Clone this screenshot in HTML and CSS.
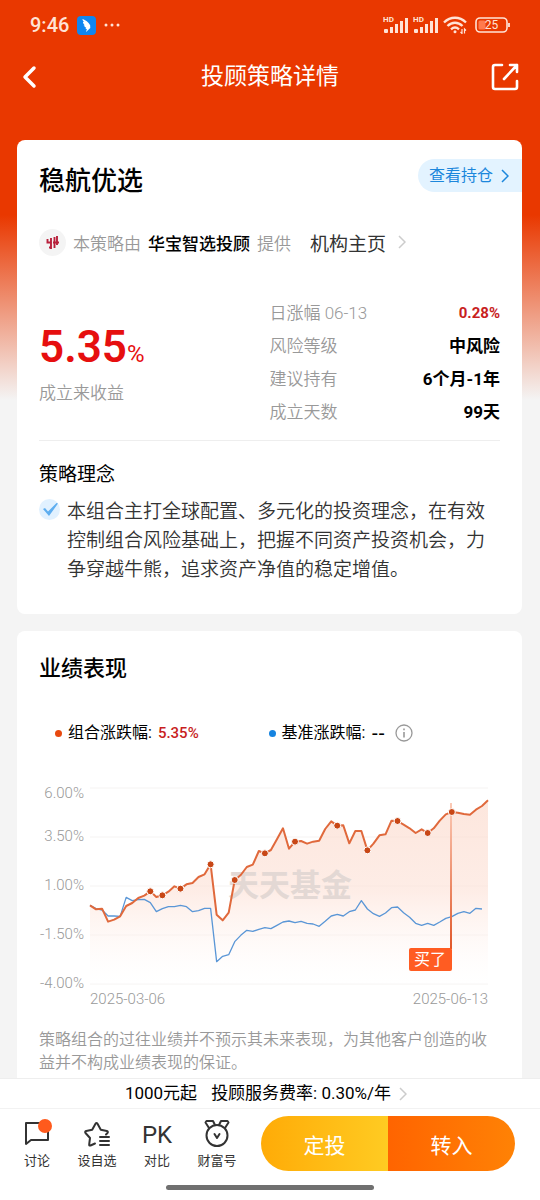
FILE: index.html
```html
<!DOCTYPE html>
<html lang="zh-CN">
<head>
    <meta charset="UTF-8">
    <meta name="viewport" content="width=device-width, initial-scale=1.0">
    <title>投顾策略详情</title>
    <link rel="stylesheet" href="styles.css">
</head>
<body>
    <!-- Status bar -->
    <div class="status">
        <span class="time">9:46</span>
        <svg class="app-icon" width="19" height="19" viewBox="0 0 19 19">
            <rect width="19" height="19" rx="4" fill="#0f86f0"/>
            <path d="M5.500 3c3 1 6 3 7.500 6 .5 1.200.2 1.900-.2 2.500h1L9 16l.9-2.900H8.300l1-1.200C7.500 11 6.700 9.600 6.800 9.300L8 9.400C6.500 8 5.900 6.600 6 5.900l1 .2C5.900 5 5.500 4 5.500 3z" fill="#fff"/>
        </svg>
        <svg width="17" height="4" viewBox="0 0 17 4" fill="#ffe3d6">
            <circle cx="2" cy="2" r="1.500"/><circle cx="8" cy="2" r="1.500"/><circle cx="14" cy="2" r="1.500"/>
        </svg>
        <div class="status-right">
            <svg width="26" height="18" viewBox="0 0 26 18">
                <use href="#signal"/>
            </svg>
            <svg width="26" height="18" viewBox="0 0 26 18">
                <g id="signal" fill="#ffe3d6">
                    <text x="0" y="6" class="hd">HD</text>
                    <rect x="1" y="13" width="4" height="4" rx="1"/>
                    <rect x="7" y="11" width="3" height="6"/>
                    <rect x="12" y="8" width="3" height="9"/>
                    <rect x="17" y="5" width="3" height="12"/>
                    <rect x="22" y="2" width="3" height="15"/>
                </g>
            </svg>
            <svg class="wifi" width="25" height="18" viewBox="0 0 25 18" fill="none" stroke="#ffe3d6" stroke-width="2.400">
                <path d="M1 6.500C7.500.2 16.500.2 23 6.500M4.500 10c4.500-4.300 10.500-4.300 15 0M8 13.300c2.500-2.200 5.500-2.200 8 0"/>
                <circle cx="12" cy="15.800" r="1.500" fill="#ffe3d6" stroke="none"/>
                <path d="M19 13v4.500l-1.500-1.500M21.500 17.500V13l1.500 1.500" stroke-width="1.200"/>
            </svg>
            <svg class="battery" width="35" height="17" viewBox="0 0 35 17">
                <rect x="1" y="1" width="31" height="14" rx="4" fill="none" stroke="#ffe3d6" stroke-width="1.600"/>
                <rect x="3.500" y="3.500" width="7" height="9" rx="1.500" fill="#ff7a4e"/>
                <path d="M34 6v4" stroke="#ffe3d6" stroke-width="1.800"/>
                <text x="16.500" y="12" text-anchor="middle" class="battery-text">25</text>
            </svg>
        </div>
    </div>

    <!-- Title bar -->
    <header class="topbar">
        <button class="icon-btn" aria-label="返回">
            <svg width="16" height="26" viewBox="0 0 16 26" fill="none" stroke="#fff" stroke-width="3.500" stroke-linecap="round" stroke-linejoin="round"><path d="M13 4L4 13l9 9"/></svg>
        </button>
        <h1>投顾策略详情</h1>
        <button class="icon-btn" aria-label="分享">
            <svg width="28" height="28" viewBox="0 0 28 28" fill="none" stroke="#fff" stroke-width="2.600" stroke-linecap="round" stroke-linejoin="round"><path d="M11 2H4a2 2 0 0 0-2 2v20a2 2 0 0 0 2 2h20a2 2 0 0 0 2-2v-6M13 16L26 2M19 2h7v7"/></svg>
        </button>
    </header>

    <main>
        <!-- Strategy summary -->
        <section class="card">
            <div class="card-head">
                <h2 class="name">稳航优选</h2>
                <a href="#" class="pill">查看持仓
                    <svg width="8" height="14" viewBox="0 0 8 14" fill="none" stroke="#1c87dc" stroke-width="1.500"><path d="M1 1l6 6-6 6"/></svg>
                </a>
            </div>
            <div class="provider">
                <svg class="logo" width="27" height="27" viewBox="0 0 27 27">
                    <circle cx="13.500" cy="13.500" r="13.500" fill="#f4f4f4"/>
                    <path d="M8.500 10v4M7.500 13.500H12M12 9v11M15.500 8v11M10 18.500h2M14 13.500h6M18 7v9" fill="none" stroke="#b8213c" stroke-width="1.900"/>
                </svg>
                <span>本策略由</span>
                <strong>华宝智选投顾</strong>
                <span>提供</span>
                <a href="#">机构主页
                    <svg width="8" height="14" viewBox="0 0 8 14" fill="none" stroke="#ccc" stroke-width="1.500"><path d="M1 1l6 6-6 6"/></svg>
                </a>
            </div>
            <div class="stats">
                <div class="total">
                    <p class="total-num">5.35<small>%</small></p>
                    <p class="total-label">成立来收益</p>
                </div>
                <dl>
                    <div><dt>日涨幅 06-13</dt><dd class="red">0.28%</dd></div>
                    <div><dt>风险等级</dt><dd>中风险</dd></div>
                    <div><dt>建议持有</dt><dd>6个月-1年</dd></div>
                    <div><dt>成立天数</dt><dd>99天</dd></div>
                </dl>
            </div>
            <h3>策略理念</h3>
            <div class="idea">
                <svg width="21" height="21" viewBox="0 0 21 21">
                    <circle cx="10.500" cy="10.500" r="10.500" fill="#e1f1ff"/>
                    <path d="M4 10l2-1 3 3.500L17.500 4l1.500.5L10 17z" fill="#5eaef0"/>
                </svg>
                <p>本组合主打全球配置、多元化的投资理念，在有效控制组合风险基础上，把握不同资产投资机会，力争穿越牛熊，追求资产净值的稳定增值。</p>
            </div>
        </section>

        <!-- Performance -->
        <section class="card card-last">
            <h2>业绩表现</h2>
            <div class="legend">
                <div class="legend-item"><i class="dot"></i>组合涨跌幅: <b>5.35%</b></div>
                <div class="legend-item"><i class="dot dot-blue"></i>基准涨跌幅: <span class="none">--</span>
                    <svg width="18" height="18" viewBox="0 0 18 18" fill="none" stroke="#999" stroke-width="1.300"><circle cx="9" cy="9" r="8"/><path d="M9 8v5.500M9 4.500v1.800" stroke-width="1.600"/></svg>
                </div>
            </div>
            <svg class="chart" viewBox="0 0 461 232">
                <defs>
                    <linearGradient id="fill" x1="0" y1="0" x2="0" y2="1">
                        <stop offset="0" stop-color="#fbd9cb" stop-opacity=".65"/>
                        <stop offset=".5" stop-color="#fde3d9" stop-opacity=".65"/>
                        <stop offset="1" stop-color="#fff" stop-opacity=".2"/>
                    </linearGradient>
                    <linearGradient id="stem" x1="0" y1="0" x2="0" y2="1">
                        <stop offset="0" stop-color="#fbcab6"/>
                        <stop offset="1" stop-color="#e0582a"/>
                    </linearGradient>
                </defs>
                <g class="axis" text-anchor="end">
                    <text x="45" y="20">6.00%</text>
                    <text x="45" y="63">3.50%</text>
                    <text x="45" y="112">1.00%</text>
                    <text x="45" y="161">-1.50%</text>
                    <text x="45" y="210">-4.00%</text>
                </g>
                <g class="axis">
                    <text x="51" y="226">2025-03-06</text>
                    <text x="449" y="226" text-anchor="end">2025-06-13</text>
                </g>
                <g transform="translate(51 10)">
                    <path class="grid" d="M0 0h398M0 49h398M0 98h398M0 147h398M0 196h398"/>
                    <polygon id="area" fill="url(#fill)"/>
                    <text class="watermark" x="138" y="108">天天基金</text>
                    <polyline id="base" class="line-base"/>
                    <polyline id="fund" class="line-fund"/>
                    <rect x="360" y="15" width="2" height="146" fill="url(#stem)"/>
                    <g id="marks" class="marks"></g>
                    <rect x="319" y="160" width="43" height="23" rx="2" fill="#ff5c22"/>
                    <text class="flag" x="340" y="177" text-anchor="middle">买了</text>
                </g>
            </svg>
            <p class="note">策略组合的过往业绩并不预示其未来表现，为其他客户创造的收益并不构成业绩表现的保证。</p>
        </section>
    </main>

    <!-- Bottom bar -->
    <footer>
        <a href="#" class="fee"><span>1000元起</span><span>投顾服务费率: 0.30%/年</span>
            <svg width="8" height="14" viewBox="0 0 8 14" fill="none" stroke="#ccc" stroke-width="1.500"><path d="M1 1l6 6-6 6"/></svg>
        </a>
        <div class="actions">
            <nav>
                <a href="#">
                    <svg width="30" height="28" viewBox="0 0 30 28" fill="none" stroke="#333" stroke-width="2" stroke-linejoin="round">
                        <path d="M4 4h22v17H9l-5 4z"/>
                        <circle cx="23" cy="7" r="7" fill="#ff5a1c" stroke="none"/>
                    </svg>
                    讨论
                </a>
                <a href="#">
                    <svg width="30" height="28" viewBox="0 0 30 28" fill="none" stroke="#333" stroke-width="2" stroke-linejoin="round" stroke-linecap="round">
                        <path d="M13 24.500l-4.500 2q-1.500.5-1.300-1.200l.8-6.300-4.500-5q-1-1.500.7-2l6-1.200 3.300-6q1-1.500 2 0l3.300 6 6 1.200q1.700.5.700 2l-1.500 1.500"/>
                        <path d="M18 18h9M18 22h9M18 26h9"/>
                    </svg>
                    设自选
                </a>
                <a href="#"><span class="pk">PK</span>对比</a>
                <a href="#">
                    <svg width="30" height="28" viewBox="0 0 30 28" fill="none" stroke="#333" stroke-width="2" stroke-linejoin="round" stroke-linecap="round">
                        <circle cx="15" cy="16.500" r="10.500"/>
                        <path d="M7 9L3.500 3.500 4.500 2H11l2 4M23 9l3.500-5.500-1-1.500H19l-2 4M12.500 15l2.500 4 2.500-4"/>
                    </svg>
                    财富号
                </a>
            </nav>
            <div class="btn-group">
                <button class="btn-plan">定投</button>
                <button class="btn-buy">转入</button>
            </div>
        </div>
        <div class="home"></div>
    </footer>

    <script>
        // one level per trading day, measured down from the top of the scale
        const TOP = 24, BOTTOM = 612, WIDTH = 398, HEIGHT = 196, DAYS = 66;
        const fund = [376, 388, 386, 425, 419, 409, 378, 369, 354, 347, 334, 351, 346, 335, 319, 326, 313,
            309, 291, 283, 253, 404, 421, 398, 300, 285, 261, 254, 213, 220, 210, 178, 145, 206, 185, 183,
            191, 185, 182, 147, 124, 137, 136, 190, 153, 153, 211, 191, 166, 163, 122, 123, 134, 145, 159,
            148, 159, 145, 122, 103, 96, 98, 102, 104, 89, 78, 61];
        const base = [376, 386, 390, 408, 408, 409, 352, 362, 359, 358, 368, 395, 386, 380, 380, 376, 380,
            395, 392, 385, 385, 545, 529, 524, 485, 466, 451, 454, 448, 443, 446, 436, 426, 423, 428, 424,
            430, 432, 439, 424, 408, 403, 408, 395, 390, 362, 387, 401, 409, 399, 383, 381, 398, 412, 430,
            436, 430, 436, 426, 415, 410, 400, 395, 400, 385, 387];
        const trades = [10, 12, 15, 20, 24, 29, 34, 41, 46, 51, 56, 60];

        function point(level, day) {
            return [day * WIDTH / DAYS, (level - TOP) / (BOTTOM - TOP) * HEIGHT];
        }

        const line = fund.map(point).join(' ');
        document.getElementById('fund').setAttribute('points', line);
        document.getElementById('area').setAttribute('points', `0,${HEIGHT} ${line} ${WIDTH},${HEIGHT}`);
        document.getElementById('base').setAttribute('points', base.map(point).join(' '));
        document.getElementById('marks').innerHTML = trades.map(day => {
            const [x, y] = point(fund[day], day);
            return `<circle cx="${x}" cy="${y}" r="3.500"/>`;
        }).join('');
    </script>
</body>
</html>
```
FILE: styles.css
```css
* {
    box-sizing: border-box;
}
body {
    margin: 0;
    min-height: 100vh;
    display: flex;
    flex-direction: column;
    font-family: Roboto, "Noto Sans CJK SC", sans-serif;
    font-size: 17px;
    color: #000;
    background: #f4f4f4 linear-gradient(#e93800 215px, #f4f4f4 400px) no-repeat;
}
h1, h2, h3, p, dl, dd {
    margin: 0;
    font-weight: 400;
}
a {
    color: inherit;
    text-decoration: none;
}
button {
    border: none;
    padding: 0;
    font-family: inherit;
    color: #fff;
    cursor: pointer;
}
svg {
    flex: none;
}

/* Status bar */
.status {
    height: 50px;
    padding: 0 30px;
    display: flex;
    align-items: center;
    gap: 8px;
    color: #ffe3d6;
}
.time {
    font-size: 20px;
    font-weight: 500;
}
.status-right {
    margin-left: auto;
    display: flex;
    align-items: center;
    gap: 4px;
}
.hd {
    font-size: 8px;
    font-weight: 700;
}
.battery {
    margin-left: 3px;
}
.battery-text {
    font-size: 12px;
    fill: #ffe3d6;
}

/* Title bar */
.topbar {
    height: 54px;
    margin-bottom: 36px;
    padding: 0 21px;
    display: flex;
    align-items: center;
    justify-content: space-between;
    color: #fff;
}
.topbar h1 {
    font-size: 23px;
    line-height: 34px;
}
.icon-btn {
    width: 28px;
    height: 28px;
    display: flex;
    align-items: center;
    background: none;
}

/* Cards */
main {
    flex: 1;
    padding: 0 18px 0 17px;
    display: flex;
    flex-direction: column;
    gap: 17px;
}
.card {
    padding: 19px 22px 30px;
    border-radius: 8px;
    background: #fff;
}
.card-last {
    flex: 1;
    padding-bottom: 4px;
    border-radius: 8px 8px 0 0;
}
.card h2 {
    font-size: 22px;
    font-weight: 500;
    line-height: 38px;
}
.card-head {
    display: flex;
    justify-content: space-between;
    align-items: flex-start;
}
.card .name {
    font-size: 26px;
    line-height: 44px;
}
.pill {
    height: 33px;
    margin-right: -22px;
    padding: 0 13px 0 11px;
    display: flex;
    align-items: center;
    gap: 8px;
    border-radius: 17px 0 0 17px;
    font-size: 16px;
    line-height: 33px;
    color: #1c87dc;
    background: #e3f3ff;
}
.provider {
    height: 28px;
    margin-top: 25px;
    display: flex;
    align-items: center;
    gap: 7px;
    color: #999;
}
.provider span {
    font-weight: 350;
}
.provider strong {
    font-weight: 500;
    color: #000;
}
.provider a {
    margin-left: 12px;
    display: flex;
    align-items: center;
    gap: 12px;
    font-size: 19px;
    color: #333;
}
.stats {
    margin-top: 41px;
    padding-bottom: 11px;
    display: flex;
    justify-content: space-between;
    border-bottom: 1px solid #eee;
}
.total {
    padding-top: 24px;
}
.total-num {
    font-size: 44px;
    line-height: 52px;
    font-weight: 600;
    color: #e60f0f;
}
.total-num small {
    font-size: 24px;
    font-weight: 400;
}
.total-label {
    font-weight: 350;
    line-height: 26px;
    color: #999;
}
dl {
    width: 50%;
}
dl div {
    display: flex;
    justify-content: space-between;
    line-height: 33px;
}
dt {
    font-weight: 350;
    color: #999;
}
dd {
    font-weight: 700;
}
.red {
    font-size: 15px;
    color: #c81e1e;
}
.card h3 {
    margin-top: 20px;
    font-size: 19px;
    line-height: 28px;
}
.idea {
    margin-top: 8px;
    display: flex;
    gap: 7px;
    font-size: 19px;
    line-height: 29px;
    color: #333;
}
.idea p {
    font-weight: 350;
}
.idea svg {
    margin-top: 2px;
}

/* Legend and chart */
.legend {
    margin-top: 30px;
    padding-left: 16px;
    display: flex;
    font-size: 16px;
    line-height: 30px;
}
.legend-item {
    flex-basis: 48%;
    display: flex;
    align-items: center;
    gap: 6px;
}
.legend b {
    font-size: 15px;
    font-weight: 500;
    color: #c81e1e;
}
.none {
    font-family: "Liberation Sans", sans-serif;
    font-size: 20px;
    margin-right: 4px;
}
.dot {
    width: 7px;
    height: 7px;
    border-radius: 50%;
    background: #e8490f;
}
.dot-blue {
    background: #1583e0;
}
.chart {
    width: 100%;
    margin-top: 30px;
    display: block;
}
.axis {
    font-size: 15px;
    font-weight: 350;
    fill: #999;
}
.grid {
    stroke: #f5f3f2;
}
.line-fund {
    fill: none;
    stroke: #e0693c;
    stroke-width: 2;
    stroke-linejoin: round;
}
.line-base {
    fill: none;
    stroke: #5a96d6;
    stroke-width: 1.3px;
    stroke-linejoin: round;
}
.marks {
    fill: #c84716;
    stroke: #fff;
    stroke-width: 1;
}
.watermark {
    font-size: 31px;
    font-weight: 700;
    fill: #e3d8d4;
}
.flag {
    font-size: 16px;
    fill: #fff;
}
.note {
    margin-top: 18px;
    font-size: 16px;
    font-weight: 350;
    line-height: 23px;
    color: #999;
}

/* Bottom bar */
footer {
    position: sticky;
    bottom: 0;
    background: #fff;
}
.fee {
    height: 31px;
    padding-right: 8px;
    display: flex;
    align-items: center;
    justify-content: center;
    gap: 14px;
    line-height: 27px;
    border-top: 1px solid #eee;
    border-bottom: 1px solid #f2f2f2;
}
.fee svg {
    margin-left: -6px;
}
.actions {
    padding: 7px 25px 0 7px;
    display: flex;
    justify-content: space-between;
}
nav {
    display: flex;
}
nav a {
    width: 60px;
    display: flex;
    flex-direction: column;
    align-items: center;
    gap: 5px;
    padding-top: 3px;
    font-size: 13px;
    line-height: 18px;
    color: #333;
}
.pk {
    height: 28px;
    font-size: 24px;
    line-height: 32px;
}
.btn-group {
    width: 254px;
    height: 55px;
    display: flex;
    border-radius: 28px;
    overflow: hidden;
}
.btn-group button {
    flex: 1;
    font-size: 21px;
}
.btn-plan {
    background: linear-gradient(to right, #ffab07, #ffcb22);
}
.btn-buy {
    background: linear-gradient(to right, #ff6400, #ff8205);
}
.home {
    width: 208px;
    height: 5px;
    margin: 14px auto 10px;
    border-radius: 3px;
    background: #707070;
}
```
